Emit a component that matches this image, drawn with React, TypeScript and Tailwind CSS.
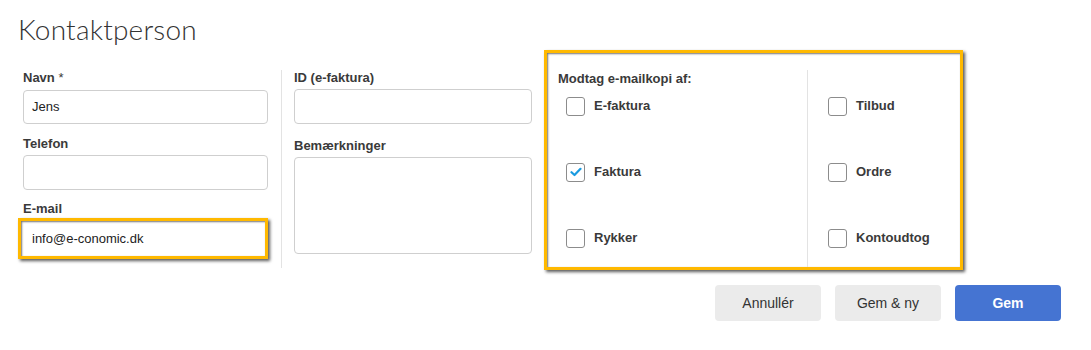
import { useState } from 'react'

const Label = ({ children }: { children: React.ReactNode }) => (
  <div className="h-[16px] leading-[16px] text-[13px] font-bold text-[#3a3a3a]">{children}</div>
)

const Check = ({ label, checked, className }: { label: string; checked?: boolean; className?: string }) => (
  <label className={`flex items-center h-[20px] ${className ?? ''}`}>
    <span className="w-[19px] h-[19px] rounded-[3px] border border-[#8c8c8c] bg-white flex items-center justify-center">
      {checked && (
        <svg width="12" height="10" viewBox="0 0 12 10">
          <path d="M1.5 5.2 L4.5 8 L10.5 1.8" fill="none" stroke="#1a9be0" strokeWidth="2.2" strokeLinecap="round" strokeLinejoin="round" />
        </svg>
      )}
    </span>
    <span className="ml-[9px] text-[13px] font-bold text-[#3a3a3a]">{label}</span>
  </label>
)

const App = () => {
  const [name] = useState('Jens')

  return (
    <main className="w-[1091px] h-[350px] bg-white pl-[18px] pt-[12px] font-['Liberation_Sans',Arial,sans-serif]">
      <h1 className="h-[34px] leading-[34px] text-[28px] font-light text-[#333] font-['Lato',sans-serif] tracking-[0.2px]">Kontaktperson</h1>

      <div className="flex items-start mt-[4px]">
        {/* venstre felter */}
        <div className="flex mt-[20px] h-[198px]">
          <div className="ml-[5px] w-[245px]">
            <Label>Navn <span className="font-normal">*</span></Label>
            <div className="mt-[4px] h-[34px] rounded-[4px] border border-[#cfcfcf] pl-[8px] flex items-center text-[13px] text-[#222]">{name}</div>
            <div className="mt-[12px]"><Label>Telefon</Label></div>
            <div className="mt-[3px] h-[35px] rounded-[4px] border border-[#cfcfcf]" />
            <div className="mt-[11px]"><Label>E-mail</Label></div>
            <div className="mt-[1px] -ml-[5px] w-[250px] h-[41px] border-[3px] border-[#ffb900] shadow-[2px_2px_3px_rgba(0,0,0,0.65),inset_1px_1px_2px_rgba(0,0,0,0.55)] pl-[11px] flex items-center text-[13px] text-[#222]">
              info@e-conomic.dk
            </div>
          </div>
          <div className="ml-[13px] w-px bg-[#e3e3e3]" />
          <div className="ml-[12px] w-[238px]">
            <Label>ID (e-faktura)</Label>
            <div className="mt-[3px] h-[35px] rounded-[4px] border border-[#cfcfcf]" />
            <div className="mt-[14px]"><Label>Bemærkninger</Label></div>
            <div className="mt-[3px] h-[97px] rounded-[4px] border border-[#cfcfcf]" />
          </div>
        </div>

        {/* e-mailkopi */}
        <div className="ml-[12px] w-[419px] h-[220px] border-[3px] border-[#ffb900] shadow-[2px_2px_3px_rgba(0,0,0,0.65),inset_1px_1px_2px_rgba(0,0,0,0.55)] flex">
          <div className="w-[260px] pl-[11px] pt-[18px]">
            <Label>Modtag e-mailkopi af:</Label>
            <div className="pl-[8px]">
              <Check label="E-faktura" className="mt-[9px]" />
              <Check label="Faktura" checked className="mt-[46px]" />
              <Check label="Rykker" className="mt-[46px]" />
            </div>
          </div>
          <div className="mt-[17px] w-px bg-[#e3e3e3]" />
          <div className="pl-[20px] pt-[43px]">
            <Check label="Tilbud" />
            <Check label="Ordre" className="mt-[46px]" />
            <Check label="Kontoudtog" className="mt-[46px]" />
          </div>
        </div>
      </div>

      <div className="flex justify-end gap-[14px] pr-[30px] mt-[15px]">
        <button className="w-[106px] h-[36px] rounded-[4px] bg-[#ebebeb] text-[14px] text-[#333]">Annullér</button>
        <button className="w-[106px] h-[36px] rounded-[4px] bg-[#ebebeb] text-[14px] text-[#333]">Gem &amp; ny</button>
        <button className="w-[106px] h-[36px] rounded-[4px] bg-[#4574d2] text-[14px] text-white font-bold">Gem</button>
      </div>
    </main>
  )
}

export default App
